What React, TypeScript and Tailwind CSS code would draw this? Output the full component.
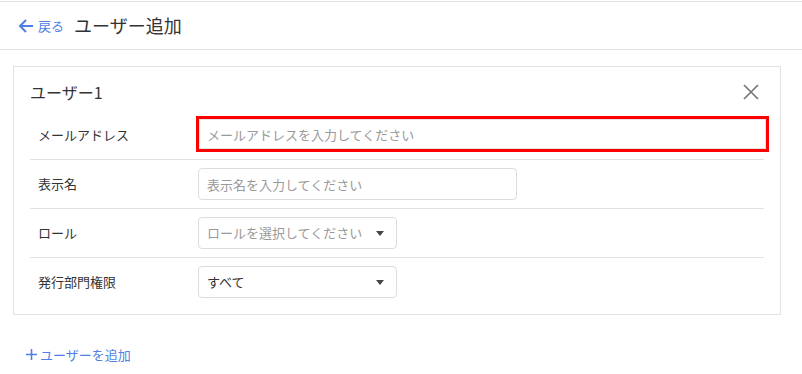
import React from "react";

const font = { fontFamily: '"Noto Sans CJK JP", "Noto Sans", sans-serif' };

function Caret() {
    return (
        <svg width="8" height="5" viewBox="0 0 8 5" className="fill-[#444]">
            <path d="M0 0h8L4 5z" />
        </svg>
    );
}

function Row({
    label,
    children,
    last,
}: {
    label: string;
    children: React.ReactNode;
    last?: boolean;
}) {
    return (
        <div
            className={`flex items-center py-2 pl-2 ${last ? "" : "border-b border-[#e2e2e2]"}`}
        >
            <div className="w-[160px] text-[13px] text-[#333]">{label}</div>
            <div className="flex-1">{children}</div>
        </div>
    );
}

export default function App() {
    return (
        <div className="w-[802px] h-[374px] bg-white" style={font}>
            <div className="mt-px border-t border-b border-[#e2e2e2] h-[49px] flex items-center px-[18px]">
                <button className="flex items-center text-[#4f7ee6]">
                    <svg width="16" height="16" viewBox="0 0 16 16" fill="none" stroke="currentColor" strokeWidth="2">
                        <path d="M15 8H2M8 2L2 8l6 6" />
                    </svg>
                    <span className="ml-1 text-[13px]">戻る</span>
                </button>
                <h1 className="ml-[10px] text-[18px] text-[#333]">ユーザー追加</h1>
            </div>

            <div className="ml-[13px] mt-4 w-[768px] border border-[#e2e2e2] px-4 pt-[13px] pb-2">
                <div className="flex items-center justify-between h-6">
                    <div className="text-[16px] text-[#333]">ユーザー1</div>
                    <svg width="22" height="22" viewBox="0 0 22 22" fill="none" stroke="#777" strokeWidth="1.7" className="mr-[2px]">
                        <path d="M4 4l14 14M18 4L4 18" />
                    </svg>
                </div>
                <div className="mt-[7px]">
                    <Row label="メールアドレス">
                        <div className="-ml-[2px] -mr-[5px] -mt-[3px] -mb-[1px] h-9 flex border-[3px] border-[#ff0000] bg-white">
                            <input
                                className="flex-1 h-full px-[7px] text-[13px] border border-[#e4e4e4] outline-none placeholder:text-[#999]"
                                placeholder="メールアドレスを入力してください"
                            />
                        </div>
                    </Row>
                    <Row label="表示名">
                        <input
                            className="w-[319px] h-8 px-2 text-[13px] border border-[#ddd] rounded placeholder:text-[#999]"
                            placeholder="表示名を入力してください"
                        />
                    </Row>
                    <Row label="ロール">
                        <div className="w-[199px] h-8 pl-2 pr-3 flex items-center justify-between border border-[#ddd] rounded text-[13px] text-[#999]">
                            <span>ロールを選択してください</span>
                            <Caret />
                        </div>
                    </Row>
                    <Row label="発行部門権限" last>
                        <div className="w-[199px] h-8 pl-2 pr-3 flex items-center justify-between border border-[#ddd] rounded text-[13px] text-[#333]">
                            <span>すべて</span>
                            <Caret />
                        </div>
                    </Row>
                </div>
            </div>

            <button className="ml-[26px] mt-[30px] flex items-center text-[13px] text-[#4f7ee6]">
                <svg width="11" height="11" viewBox="0 0 11 11" stroke="currentColor" strokeWidth="1.6">
                    <path d="M5.5 0v11M0 5.5h11" />
                </svg>
                <span className="ml-[3px]">ユーザーを追加</span>
            </button>
        </div>
    );
}
